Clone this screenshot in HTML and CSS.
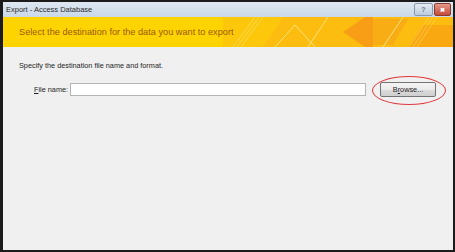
FILE: index.html
```html
<!DOCTYPE html>
<html lang="en">
<head>
    <meta charset="UTF-8">
    <title>Export - Access Database</title>
    <link rel="stylesheet" href="styles.css">
</head>
<body>
    <div class="window">
        <div class="titlebar">
            <span class="title">Export - Access Database</span>
            <div class="caption-buttons">
                <span class="cap-btn help">?</span>
                <span class="cap-btn close">&#x2716;</span>
            </div>
        </div>

        <div class="banner">
            <span class="banner-text">Select the destination for the data you want to export</span>
            <svg class="banner-art" width="230" height="30" viewBox="0 0 230 30">
                <polygon points="0,0 230,0 230,30 0,30" fill="#fdc80c"/>
                <polygon points="60,0 230,0 230,30 40,30" fill="#fcbd10"/>
                <polygon points="120,15 142,0 150,0 150,30 142,30" fill="#f79d16"/>
                <polygon points="150,2 185,2 170,28 150,28" fill="#f9ad14"/>
                <polygon points="185,30 200,8 230,8 230,30" fill="#faa812"/>
                <line x1="52" y1="30" x2="72" y2="8" stroke="#ffe27a" stroke-width="1"/>
                <line x1="72" y1="8" x2="92" y2="30" stroke="#ffe27a" stroke-width="1"/>
                <line x1="85" y1="30" x2="105" y2="0" stroke="#ffe27a" stroke-width="1"/>
                <line x1="160" y1="30" x2="180" y2="0" stroke="#ffe27a" stroke-width="1"/>
                <line x1="10" y1="30" x2="32" y2="0" stroke="#ffe27a" stroke-width="0.6"/>
                <line x1="14" y1="30" x2="36" y2="0" stroke="#ffe27a" stroke-width="0.6"/>
                <line x1="18" y1="30" x2="40" y2="0" stroke="#ffe27a" stroke-width="0.6"/>
                <line x1="186" y1="30" x2="206" y2="0" stroke="#ffd85a" stroke-width="0.6"/>
                <line x1="190" y1="30" x2="210" y2="0" stroke="#ffd85a" stroke-width="0.6"/>
                <line x1="194" y1="30" x2="214" y2="0" stroke="#ffd85a" stroke-width="0.6"/>
            </svg>
        </div>

        <div class="content">
            <p class="intro">Specify the destination file name and format.</p>
            <div class="file-row">
                <label class="file-label" for="fileName"><u>F</u>ile name:</label>
                <input class="file-input" type="text" id="fileName">
                <div class="browse-wrap">
                    <button class="browse-btn" type="button">B<u>r</u>owse...</button>
                    <span class="highlight-ring"></span>
                </div>
            </div>
        </div>
    </div>
</body>
</html>
```

FILE: styles.css
```css
body {
    margin: 0;
    background-color: #1b1b1b;
    font-family: "Liberation Sans", Arial, sans-serif;
}

.window {
    margin: 2px 2px 2px 3px;
    height: 248px;
    display: flex;
    flex-direction: column;
    background-color: #f0f0f0;
}

.titlebar {
    height: 15px;
    display: flex;
    align-items: center;
    justify-content: space-between;
    background: linear-gradient(to bottom, #dfe8f2, #c9d7e8);
    padding-left: 3px;
}

.title {
    font-size: 7.5px;
    color: #2b2b2b;
}

.caption-buttons {
    display: flex;
    gap: 1px;
    margin-right: 2px;
    align-self: flex-start;
    margin-top: 1px;
}

.cap-btn {
    height: 11px;
    display: flex;
    align-items: center;
    justify-content: center;
    border: 1px solid #8a98ab;
    border-radius: 2px;
    font-size: 7px;
    font-weight: bold;
}

.help {
    width: 17px;
    background: linear-gradient(to bottom, #e4ebf3, #bccbdd);
    color: #6b7788;
}

.close {
    width: 15px;
    background: linear-gradient(to bottom, #e49a8c, #c44a38);
    border-color: #8b3a2e;
    color: #ffffff;
    font-size: 6px;
}

.banner {
    position: relative;
    height: 30px;
    display: flex;
    align-items: center;
    background-color: #fdd300;
    overflow: hidden;
}

.banner-text {
    position: relative;
    z-index: 1;
    padding-left: 16px;
    font-size: 9.2px;
    color: #9c5a00;
}

.banner-art {
    position: absolute;
    right: 0;
    top: 0;
}

.content {
    flex: 1;
    padding: 14px 16px 0 16px;
}

.intro {
    margin: 0;
    font-size: 7.3px;
    color: #1e1e1e;
}

.file-row {
    display: flex;
    align-items: center;
    margin-top: 12px;
}

.file-label {
    width: 36px;
    margin-left: 15px;
    font-size: 7.3px;
    color: #1e1e1e;
}

.file-input {
    width: 296px;
    height: 13px;
    box-sizing: border-box;
    margin: 0;
    border: 1px solid #b4b4b4;
    background-color: #ffffff;
}

.browse-wrap {
    position: relative;
    margin-left: 14px;
}

.browse-btn {
    display: block;
    width: 56px;
    height: 15px;
    padding: 0;
    border: 1px solid #747474;
    border-radius: 2px;
    background: linear-gradient(to bottom, #f4f4f4 0%, #ebebeb 50%, #dcdcdc 51%, #cfcfcf 100%);
    font-family: "Liberation Sans", Arial, sans-serif;
    font-size: 7.3px;
    color: #1e1e1e;
}

.highlight-ring {
    position: absolute;
    left: -8px;
    top: -6px;
    width: 72px;
    height: 27px;
    border: 1px solid #e0393c;
    border-radius: 50%;
}
```
